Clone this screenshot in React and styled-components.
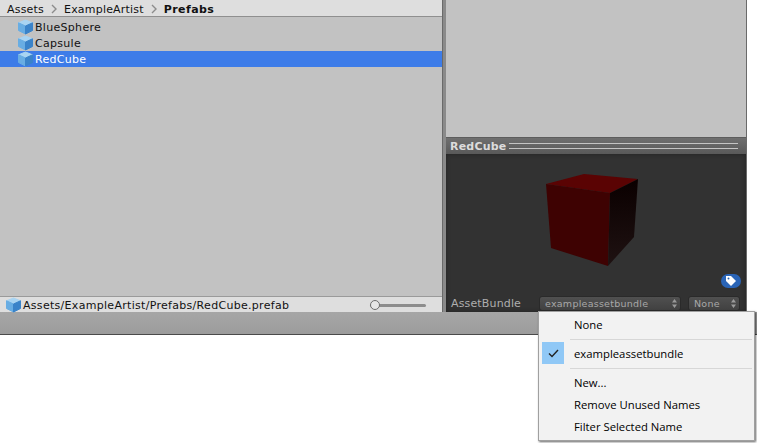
import React from "react";
import styled, { createGlobalStyle } from "styled-components";

const GlobalStyle = createGlobalStyle`
  html, body {
    margin: 0;
    padding: 0;
    background: #ffffff;
  }
`;

const Page = styled.div`
  position: relative;
  width: 757px;
  height: 443px;
  overflow: hidden;
  background: #fff;
  font-family: "DejaVu Sans", sans-serif;
  font-size: 11px;
  letter-spacing: 0.3px;
`;

const Editor = styled.div`
  display: flex;
  width: 747px;
  height: 312px;
  background: #a2a2a2;
`;

const ProjectPane = styled.div`
  display: flex;
  flex-direction: column;
  width: 442px;
  flex: none;
`;

const Breadcrumb = styled.div`
  display: flex;
  align-items: center;
  box-sizing: border-box;
  height: 17px;
  padding: 2px 0 0 7px;
  background: #dedede;
  border-bottom: 1px solid #8f8f8f;
  color: #111;
`;

const Crumb = styled.span`
  font-weight: ${(p) => (p.$current ? 700 : 400)};
  letter-spacing: ${(p) => (p.$current ? "0.4px" : "0.2px")};
`;

const Chevron = styled.svg`
  width: 6px;
  height: 10px;
  margin: 0 7px;
`;

const AssetList = styled.div`
  flex: 1;
  padding-top: 2px;
  background: #c2c2c2;
`;

const AssetRow = styled.div`
  display: flex;
  align-items: center;
  height: 16px;
  padding-left: 17px;
  gap: 1px;
  background: ${(p) => (p.$selected ? "#3d7ce8" : "transparent")};
  color: ${(p) => (p.$selected ? "#fff" : "#111")};
`;

const PathBar = styled.div`
  display: flex;
  align-items: center;
  box-sizing: border-box;
  height: 16px;
  padding: 1px 0 0 5px;
  background: #dedede;
  border-top: 1px solid #9a9a9a;
  color: #111;
  gap: 1px;
`;

const PathText = styled.span`
  flex: 1;
`;

const Slider = styled.div`
  position: relative;
  width: 56px;
  height: 3px;
  margin-right: 16px;
  border-radius: 2px;
  background: #8d8d8d;
`;

const Thumb = styled.div`
  position: absolute;
  left: 0;
  top: -4px;
  box-sizing: border-box;
  width: 10px;
  height: 10px;
  border: 1px solid #6e6e6e;
  border-radius: 50%;
  background: #e6e6e6;
`;

const Splitter = styled.div`
  width: 4px;
  flex: none;
  background: #8a8a8a;
  border-left: 1px solid #6a6a6a;
  box-sizing: border-box;
`;

const SidePane = styled.div`
  display: flex;
  flex-direction: column;
  flex: 1;
  border-right: 1px solid #6a6a6a;
`;

const InspectorBody = styled.div`
  flex: 1;
  background: #c2c2c2;
  border-bottom: 1px solid #5d5d5d;
`;

const PreviewHeader = styled.div`
  display: flex;
  align-items: center;
  gap: 3px;
  height: 16px;
  padding: 0 8px 0 4px;
  background: linear-gradient(#6f6f6f, #595959);
  color: #dcdcdc;
  font-weight: 700;
  letter-spacing: 0.2px;
`;

const Grip = styled.div`
  flex: 1;
  height: 4px;
  border-top: 1px solid #c4c4c4;
  border-bottom: 1px solid #c4c4c4;
`;

const Preview = styled.div`
  position: relative;
  display: flex;
  flex-direction: column;
  height: 158px;
  background: #323232;
  box-shadow: inset 0 0 4px #222;
`;

const Stage = styled.div`
  flex: 1;
  padding: 20px 0 0 100px;
`;

const LabelBadge = styled.div`
  position: absolute;
  right: 5px;
  bottom: 24px;
  display: flex;
  align-items: center;
  justify-content: center;
  width: 20px;
  height: 14px;
  border-radius: 7px;
  background: #2a64b6;
`;

const BundleBar = styled.div`
  display: flex;
  align-items: center;
  height: 17px;
  padding: 0 4px 0 5px;
  color: #aeaeae;
  letter-spacing: 0.15px;
`;

const BundleLabel = styled.span`
  width: 88px;
  flex: none;
`;

const BundleSelect = styled.div`
  display: flex;
  align-items: center;
  justify-content: space-between;
  box-sizing: border-box;
  width: ${(p) => p.$width}px;
  height: 15px;
  margin-right: ${(p) => p.$gap}px;
  padding: 0 3px 0 5px;
  border: 1px solid #2a2a2a;
  border-radius: 3px;
  background: linear-gradient(#505050, #414141);
  color: #a8a8a8;
  font-size: 9.5px;
  letter-spacing: 0.25px;
`;

const Footer = styled.div`
  box-sizing: border-box;
  height: 23px;
  background: linear-gradient(#a6a6a6, #9c9c9c);
  border-bottom: 1px solid #4a4a4a;
`;

const Menu = styled.div`
  position: absolute;
  left: 538px;
  top: 311px;
  box-sizing: border-box;
  width: 217px;
  height: 130px;
  padding-top: 1px;
  background: #f2f2f2;
  border: 1px solid #a0a0a0;
  box-shadow: 1px 1px 2px rgba(0, 0, 0, 0.6);
  color: #000;
  font-family: "Open Sans", "Noto Sans", sans-serif;
  font-size: 11.3px;
  letter-spacing: 0;
`;

const MenuItem = styled.div`
  display: flex;
  align-items: center;
  height: 22px;
  padding-left: 35px;
  position: relative;
`;

const CheckMark = styled.div`
  position: absolute;
  left: 3px;
  top: 0;
  display: flex;
  align-items: center;
  justify-content: center;
  width: 22px;
  height: 22px;
  background: #90c8f6;
`;

const MenuRule = styled.div`
  height: 1px;
  margin: 4px 2px 2px 31px;
  background: #d7d7d7;
`;

function PrefabIcon() {
  return (
    <svg width="17" height="16" viewBox="0 0 17 16">
      <g strokeLinejoin="round" strokeWidth="1">
        <polygon points="8.5,1 15.5,3.8 8.5,7 1.5,3.8" fill="#a9d4f2" stroke="#a9d4f2" />
        <polygon points="1.5,3.8 8.5,7 8.5,15 1.5,11.5" fill="#68ade3" stroke="#68ade3" />
        <polygon points="15.5,3.8 8.5,7 8.5,15 15.5,11.5" fill="#3a83c9" stroke="#3a83c9" />
      </g>
    </svg>
  );
}

function Sep() {
  return (
    <Chevron viewBox="0 0 6 10">
      <path d="M1 1l4 4-4 4" fill="none" stroke="#8c8c8c" strokeWidth="1.4" />
    </Chevron>
  );
}

function UpDown() {
  return (
    <svg width="5" height="9" viewBox="0 0 5 9">
      <path d="M2.5 0L5 3.5H0zM2.5 9L0 5.5h5z" fill="#9a9a9a" />
    </svg>
  );
}

const assets = ["BlueSphere", "Capsule", "RedCube"];

export default function App() {
  return (
    <Page>
      <GlobalStyle />
      <Editor>
        <ProjectPane>
          <Breadcrumb>
            <Crumb>Assets</Crumb>
            <Sep />
            <Crumb>ExampleArtist</Crumb>
            <Sep />
            <Crumb $current>Prefabs</Crumb>
          </Breadcrumb>
          <AssetList>
            {assets.map((name) => (
              <AssetRow key={name} $selected={name === "RedCube"}>
                <PrefabIcon />
                {name}
              </AssetRow>
            ))}
          </AssetList>
          <PathBar>
            <PrefabIcon />
            <PathText>Assets/ExampleArtist/Prefabs/RedCube.prefab</PathText>
            <Slider>
              <Thumb />
            </Slider>
          </PathBar>
        </ProjectPane>
        <Splitter />
        <SidePane>
          <InspectorBody />
          <PreviewHeader>
            RedCube
            <Grip />
          </PreviewHeader>
          <Preview>
            <Stage>
              <svg width="95" height="94" viewBox="0 0 95 94">
                <defs>
                  <linearGradient id="side" x1="0" y1="0" x2="0" y2="1">
                    <stop offset="0" stopColor="#0a0000" />
                    <stop offset="1" stopColor="#1f1212" />
                  </linearGradient>
                </defs>
                <polygon points="0,10 38,0 92,5 64,19" fill="#5a0303" />
                <polygon points="0,10 64,19 62,92 5,74" fill="#3e0202" />
                <polygon points="64,19 92,5 88,63 62,92" fill="url(#side)" />
              </svg>
            </Stage>
            <LabelBadge>
              <svg width="12" height="12" viewBox="0 0 12 12">
                <path d="M1 1h5l5 5-5 5-5-5z" fill="#fff" />
                <circle cx="3.5" cy="3.5" r="1" fill="#2a64b6" />
              </svg>
            </LabelBadge>
            <BundleBar>
              <BundleLabel>AssetBundle</BundleLabel>
              <BundleSelect $width={142} $gap={7}>
                exampleassetbundle
                <UpDown />
              </BundleSelect>
              <BundleSelect $width={52} $gap={0}>
                None
                <UpDown />
              </BundleSelect>
            </BundleBar>
          </Preview>
        </SidePane>
      </Editor>
      <Footer />
      <Menu>
        <MenuItem>None</MenuItem>
        <MenuRule />
        <MenuItem>
          <CheckMark>
            <svg width="11" height="9" viewBox="0 0 11 9">
              <path d="M1 4.5L4 7.5L10 1" fill="none" stroke="#222" strokeWidth="1.4" />
            </svg>
          </CheckMark>
          exampleassetbundle
        </MenuItem>
        <MenuRule />
        <MenuItem>New...</MenuItem>
        <MenuItem>Remove Unused Names</MenuItem>
        <MenuItem>Filter Selected Name</MenuItem>
      </Menu>
    </Page>
  );
}
